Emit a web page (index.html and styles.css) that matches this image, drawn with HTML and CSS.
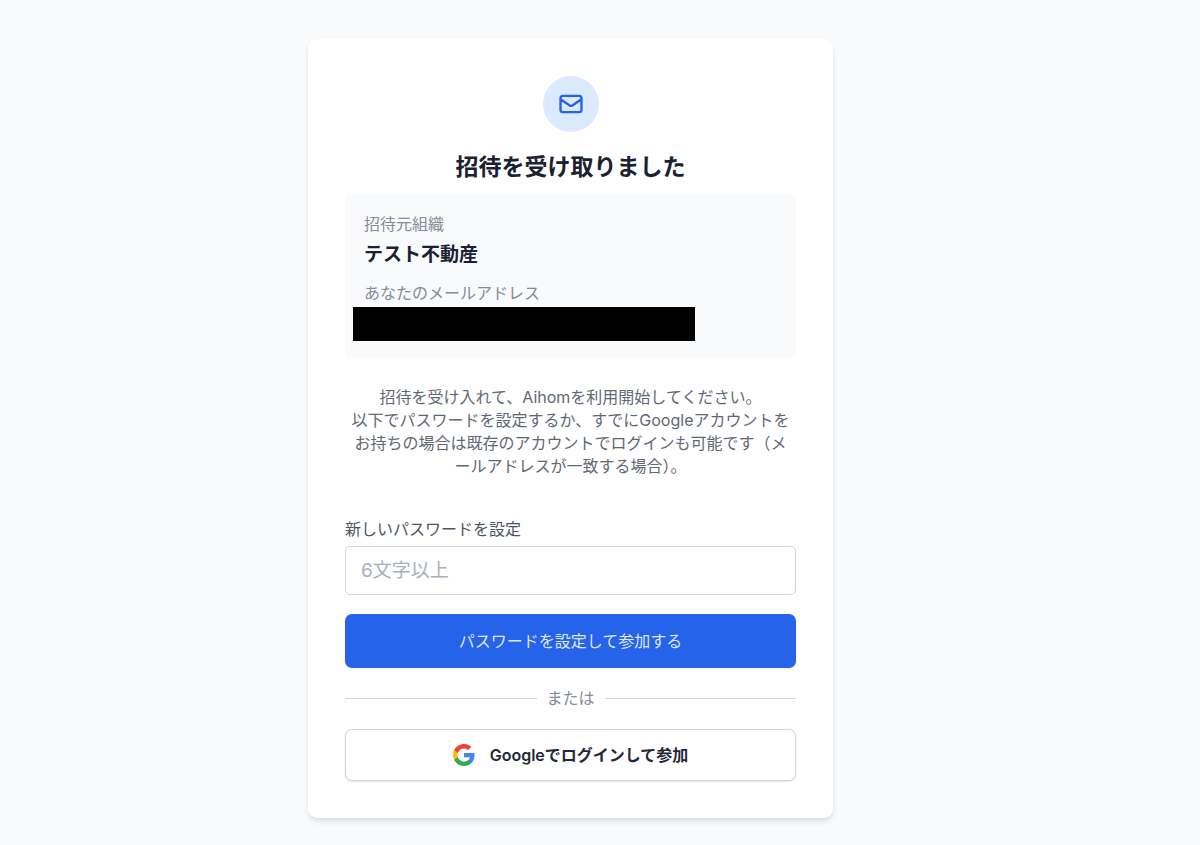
FILE: index.html
```
<!DOCTYPE html>
<html lang="ja">
<head>
<meta charset="utf-8">
<meta name="viewport" content="width=device-width, initial-scale=1">
<title>招待を受け取りました</title>
<link rel="stylesheet" href="styles.css">
</head>
<body>
<main class="page">
  <section class="card">
    <div class="badge">
      <svg class="badge-icon" viewBox="0 0 24 24" fill="none" stroke="currentColor" stroke-width="2" stroke-linecap="round" stroke-linejoin="round" aria-hidden="true">
        <path d="M3 8l7.89 5.26a2 2 0 002.22 0L21 8M5 19h14a2 2 0 002-2V7a2 2 0 00-2-2H5a2 2 0 00-2 2v10a2 2 0 002 2z"/>
      </svg>
    </div>
    <h1 class="title">招待を受け取りました</h1>

    <div class="info">
      <p class="info-label">招待元組織</p>
      <p class="info-value">テスト不動産</p>
      <p class="info-label info-label-next">あなたのメールアドレス</p>
      <p class="info-value info-email"><span class="redaction"></span></p>
    </div>

    <p class="lead">招待を受け入れて、Aihomを利用開始してください。<br>以下でパスワードを設定するか、すでにGoogleアカウントを<br>お持ちの場合は既存のアカウントでログインも可能です（メ<br>ールアドレスが一致する場合）。</p>

    <form class="form">
      <label class="field-label" for="password">新しいパスワードを設定</label>
      <input class="field" id="password" type="password" placeholder="6文字以上" minlength="6">
      <button class="button button-primary" type="submit">パスワードを設定して参加する</button>
    </form>

    <div class="divider"><span>または</span></div>

    <button class="button button-google" type="button">
      <svg class="google-icon" viewBox="1 1 22 22" aria-hidden="true">
        <path fill="#4285F4" d="M22.56 12.25c0-.78-.07-1.53-.2-2.25H12v4.26h5.92c-.26 1.37-1.04 2.53-2.21 3.31v2.77h3.57c2.08-1.92 3.28-4.74 3.28-8.09z"/>
        <path fill="#34A853" d="M12 23c2.97 0 5.46-.98 7.28-2.66l-3.57-2.77c-.98.66-2.23 1.06-3.71 1.06-2.86 0-5.29-1.93-6.16-4.53H2.18v2.84C3.99 20.53 7.7 23 12 23z"/>
        <path fill="#FBBC05" d="M5.84 14.09c-.22-.66-.35-1.36-.35-2.09s.13-1.43.35-2.09V7.07H2.18C1.43 8.55 1 10.22 1 12s.43 3.45 1.18 4.93l2.85-2.22.81-.62z"/>
        <path fill="#EA4335" d="M12 5.38c1.62 0 3.06.56 4.21 1.64l3.15-3.15C17.45 2.09 14.97 1 12 1 7.7 1 3.99 3.47 2.18 7.07l3.66 2.84c.87-2.6 3.3-4.53 6.16-4.53z"/>
      </svg>
      Googleでログインして参加
    </button>
  </section>
</main>
</body>
</html>
```
FILE: styles.css
```
* {
  box-sizing: border-box;
}

body {
  margin: 0;
  background: #f9fafb;
  color: #1a2130;
  font-family: Inter, "Noto Sans CJK JP", sans-serif;
  font-size: 16px;
  line-height: 24px;
}

h1,
p {
  margin: 0;
}

.page {
  display: flex;
  justify-content: center;
  min-height: 100vh;
  padding: 39px 59px 26px 0;
}

.card {
  width: 100%;
  max-width: 525px;
  align-self: flex-start;
  padding: 37px;
  border-radius: 9px;
  background: #fff;
  box-shadow: 0 4px 7px -1px rgb(0 0 0 / 10%), 0 2px 4px -2px rgb(0 0 0 / 10%);
}

.badge {
  display: flex;
  align-items: center;
  justify-content: center;
  width: 56px;
  height: 56px;
  margin: 0 auto 19px;
  border-radius: 50%;
  background: #dbeafe;
  color: #2563eb;
}

.badge-icon {
  width: 28px;
  height: 28px;
}

.title {
  font-size: 23px;
  font-weight: 600;
  line-height: 33px;
  text-align: center;
}

.info {
  margin-top: 10px;
  padding: 18px 19px 20px;
  border-radius: 5px;
  background: #f9fafb;
}

.info-label {
  color: #858b98;
}

.info-label-next {
  margin-top: 12px;
}

.info-value {
  margin-top: 5px;
  font-size: 19px;
  font-weight: 600;
  line-height: 28px;
}

.info-email {
  position: relative;
  min-height: 28px;
}

.redaction {
  position: absolute;
  top: -3px;
  left: -11px;
  width: 342px;
  max-width: 100%;
  height: 34px;
  background: #000;
}

.lead {
  margin: 28px -8px 0;
  color: #5f6875;
  line-height: 23px;
  text-align: center;
}

.form {
  display: flex;
  flex-direction: column;
  margin-top: 39px;
}

.field-label {
  color: #4b5563;
}

.field {
  width: 100%;
  height: 49px;
  margin-top: 5px;
  padding: 0 15px;
  border: 1px solid #d1d5db;
  border-radius: 5px;
  background: #fff;
  color: inherit;
  font: inherit;
  font-size: 19px;
}

.field::placeholder {
  color: #a9afba;
}

.button {
  display: flex;
  align-items: center;
  justify-content: center;
  width: 100%;
  border-radius: 7px;
  font: inherit;
  cursor: pointer;
}

.button-primary {
  height: 54px;
  margin-top: 19px;
  border: 0;
  background: #2563eb;
  box-shadow: 0 1px 2px rgb(0 0 0 / 5%);
  color: #dfe8fc;
}

.divider {
  display: flex;
  align-items: center;
  gap: 10px;
  margin: 18px 0 19px;
  color: #858b98;
}

.divider::before,
.divider::after {
  content: "";
  flex: 1;
  border-top: 1px solid #d1d5db;
}

.button-google {
  gap: 15px;
  height: 52px;
  border: 1px solid #d1d5db;
  background: #fff;
  box-shadow: 0 1px 2px rgb(0 0 0 / 10%);
  color: #1f2937;
  font-weight: 600;
}

.google-icon {
  width: 22px;
  height: 22px;
}
```
